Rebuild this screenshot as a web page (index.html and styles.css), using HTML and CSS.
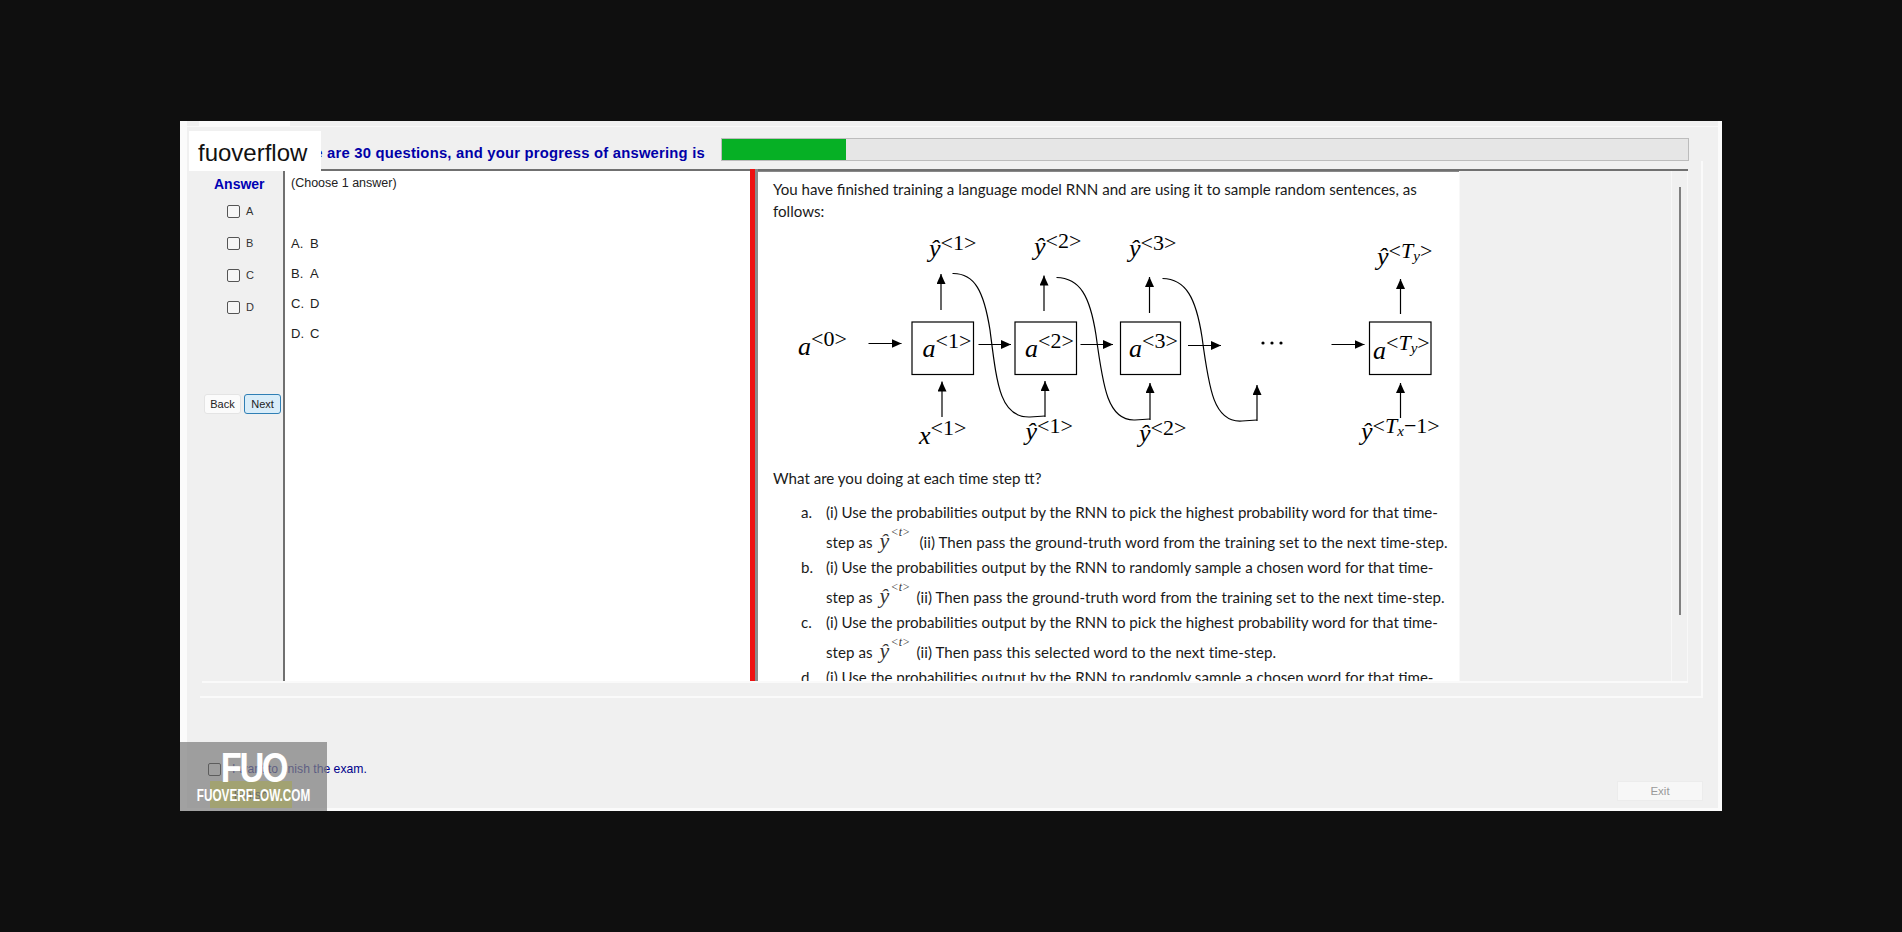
FILE: index.html
```html
<!DOCTYPE html>
<html lang="en">
<head>
  <meta charset="UTF-8">
  <title>Exam</title>
  <link rel="stylesheet" href="styles.css">
</head>
<body>

  <div class="window">
    <div class="tabs"><div class="tab"></div></div>

    <div class="head">
      <span class="head-text">There are 30 questions, and your progress of answering is</span>
      <div class="progress"><div class="progress-fill"></div></div>
    </div>

    <div class="exam">
      <div class="exam-inner">

        <div class="answers">
          <div class="answers-title">Answer</div>
          <label class="answer-row"><input type="checkbox"> A</label>
          <label class="answer-row"><input type="checkbox"> B</label>
          <label class="answer-row"><input type="checkbox"> C</label>
          <label class="answer-row"><input type="checkbox"> D</label>
          <div class="nav-buttons">
            <button class="btn-nav">Back</button>
            <button class="btn-nav btn-next">Next</button>
          </div>
        </div>

        <div class="choices">
          <div class="choices-hint">(Choose 1 answer)</div>
          <div class="choice"><span class="choice-key">A.</span>B</div>
          <div class="choice"><span class="choice-key">B.</span>A</div>
          <div class="choice"><span class="choice-key">C.</span>D</div>
          <div class="choice"><span class="choice-key">D.</span>C</div>
        </div>

        <div class="divider"></div>

        <div class="viewer">
          <div class="page">
            <p class="intro">You have finished training a language model RNN and are using it to sample random sentences, as follows:</p>

            <!-- viewBox uses window coordinates so the parts are easy to line up -->
            <svg class="rnn" viewBox="772 222 688 240" width="688" height="240">
              <defs>
                <marker id="head" markerUnits="userSpaceOnUse" markerWidth="10" markerHeight="9" refX="10" refY="4.5" orient="auto">
                  <path d="M0 0L10 4.5L0 9z" fill="#000"/>
                </marker>
              </defs>

              <rect class="cell" x="912" y="322" width="61.5" height="52.5"/>
              <rect class="cell" x="1015" y="322" width="61.5" height="52.5"/>
              <rect class="cell" x="1120.5" y="322" width="60" height="52.5"/>
              <rect class="cell" x="1369.5" y="322" width="61.5" height="52.5"/>

              <line class="arrow" x1="868.5" y1="343.5" x2="901.5" y2="343.5"/>
              <line class="arrow" x1="978.5" y1="344.5" x2="1011" y2="344.5"/>
              <line class="arrow" x1="1080.5" y1="344.5" x2="1113" y2="344.5"/>
              <line class="arrow" x1="1188" y1="345.5" x2="1221" y2="345.5"/>
              <line class="arrow" x1="1331.5" y1="344.5" x2="1364.5" y2="344.5"/>

              <line class="arrow" x1="941" y1="310" x2="941" y2="274"/>
              <line class="arrow" x1="1044" y1="311" x2="1044" y2="275.5"/>
              <line class="arrow" x1="1149.5" y1="313" x2="1149.5" y2="277"/>
              <line class="arrow" x1="1400.5" y1="314" x2="1400.5" y2="279"/>

              <line class="arrow" x1="942" y1="417" x2="942" y2="381.5"/>
              <line class="arrow" x1="1045" y1="417" x2="1045" y2="381"/>
              <line class="arrow" x1="1150" y1="420" x2="1150" y2="383"/>
              <line class="arrow" x1="1257" y1="421" x2="1257" y2="385"/>
              <line class="arrow" x1="1400.5" y1="418" x2="1400.5" y2="383"/>

              <path class="wire" d="M952.5 273.5C975 273 984 292 990 330C997 385 1000 418 1030 417L1045 416"/>
              <path class="wire" d="M1056.5 277.5C1080 278 1090 296 1096 335C1103 388 1108 421 1135 420L1150 419"/>
              <path class="wire" d="M1162.5 278.5C1186 279 1196 298 1202 337C1209 390 1214 423 1242 421L1257 420"/>

              <circle cx="1263" cy="343" r="1.6"/>
              <circle cx="1272" cy="343" r="1.6"/>
              <circle cx="1281" cy="343" r="1.6"/>

              <text class="math" x="929" y="257">ŷ<tspan class="sup" dy="-7">&lt;1&gt;</tspan></text>
              <text class="math" x="1034" y="255">ŷ<tspan class="sup" dy="-7">&lt;2&gt;</tspan></text>
              <text class="math" x="1129" y="257">ŷ<tspan class="sup" dy="-7">&lt;3&gt;</tspan></text>
              <text class="math" x="1377" y="265">ŷ<tspan class="sup" dy="-7">&lt;<tspan class="sub-i">T</tspan><tspan class="sub-i sub" dy="3">y</tspan><tspan dy="-3">&gt;</tspan></tspan></text>

              <text class="math" x="798" y="355">a<tspan class="sup" dy="-9">&lt;0&gt;</tspan></text>
              <text class="math" x="922.5" y="357">a<tspan class="sup" dy="-9">&lt;1&gt;</tspan></text>
              <text class="math" x="1025" y="357">a<tspan class="sup" dy="-9">&lt;2&gt;</tspan></text>
              <text class="math" x="1129" y="357">a<tspan class="sup" dy="-9">&lt;3&gt;</tspan></text>
              <text class="math" x="1373" y="359">a<tspan class="sup" dy="-9">&lt;<tspan class="sub-i">T</tspan><tspan class="sub-i sub" dy="3">y</tspan><tspan dy="-3">&gt;</tspan></tspan></text>

              <text class="math" x="919" y="444">x<tspan class="sup" dy="-9">&lt;1&gt;</tspan></text>
              <text class="math" x="1025.5" y="440">ŷ<tspan class="sup" dy="-7">&lt;1&gt;</tspan></text>
              <text class="math" x="1139" y="442">ŷ<tspan class="sup" dy="-7">&lt;2&gt;</tspan></text>
              <text class="math" x="1361" y="440">ŷ<tspan class="sup" dy="-7">&lt;<tspan class="sub-i">T</tspan><tspan class="sub-i sub" dy="3">x</tspan><tspan dy="-3">−1&gt;</tspan></tspan></text>
            </svg>

            <p class="ask">What are you doing at each time step tt?</p>

            <div class="opt">
              <span class="opt-key">a.</span>
              <div class="opt-line">(i) Use the probabilities output by the RNN to pick the highest probability word for that time-</div>
              <div class="opt-line opt-line-2">step as <span class="yt yt-wide">y&#770;<sup>&lt;t&gt;</sup></span>(ii) Then pass the ground-truth word from the training set to the next time-step.</div>
            </div>
            <div class="opt">
              <span class="opt-key">b.</span>
              <div class="opt-line">(i) Use the probabilities output by the RNN to randomly sample a chosen word for that time-</div>
              <div class="opt-line opt-line-2">step as <span class="yt">y&#770;<sup>&lt;t&gt;</sup></span>(ii) Then pass the ground-truth word from the training set to the next time-step.</div>
            </div>
            <div class="opt">
              <span class="opt-key">c.</span>
              <div class="opt-line">(i) Use the probabilities output by the RNN to pick the highest probability word for that time-</div>
              <div class="opt-line opt-line-2">step as <span class="yt">y&#770;<sup>&lt;t&gt;</sup></span>(ii) Then pass this selected word to the next time-step.</div>
            </div>
            <div class="opt">
              <span class="opt-key">d.</span>
              <div class="opt-line">(i) Use the probabilities output by the RNN to randomly sample a chosen word for that time-</div>
            </div>
          </div>

          <div class="gutter"></div>
          <div class="scroll"><div class="scroll-thumb"></div></div>
        </div>

      </div>
    </div>

    <div class="foot">
      <div class="finish">
        <label class="finish-check"><input type="checkbox"> I want to finish the exam.</label>
        <button class="btn-finish">Finish</button>
      </div>
      <button class="btn-exit">Exit</button>
    </div>

    <div class="logo">fuoverflow</div>
    <div class="stamp">
      <div class="stamp-mark">FUO</div>
      <div class="stamp-site">FUOVERFLOW.COM</div>
    </div>
  </div>

</body>
</html>
```

FILE: styles.css
```css
* {
  box-sizing: border-box;
}
html, body {
  height: 100%;
}
body {
  margin: 0;
  background: #0f0f0f;
  overflow: hidden;
  font-family: "Liberation Sans", Arial, sans-serif;
  font-size: 12px;
  color: #222;
}
.window {
  position: relative;
  width: 1542px;
  height: 690px;
  margin: 121px 0 0 180px;
  background: #f0f0f0;
  border-left: 7px solid #fbfbfb;
  border-right: 4px solid #fbfbfb;
  border-bottom: 3px solid #fbfbfb;
  display: flex;
  flex-direction: column;
}
.tabs {
  height: 6px;
  border-bottom: 1px solid #f9f9f9;
}
.tab {
  width: 91px;
  height: 6px;
  margin-left: 12px;
  background: #fafafa;
}

/* top bar */
.head {
  height: 23px;
  margin-top: 11px;
  padding-right: 29px;
  display: flex;
  justify-content: flex-end;
  align-items: center;
  gap: 16px;
}
.head-text {
  font-size: 14.8px;
  font-weight: bold;
  letter-spacing: 0.22px;
  color: #0000a8;
  padding-top: 6px;
  white-space: nowrap;
}
.progress {
  width: 968px;
  height: 23px;
  background: #e6e6e6;
  border: 1px solid #bcbcbc;
}
.progress-fill {
  width: 124px;
  height: 100%;
  background: #06b025;
}

/* exam frame */
.exam {
  width: 1503px;
  height: 537px;
  margin-left: 13px;
  padding: 8px 0 0 2px;
  border-right: 2px solid #fafafa;
  border-bottom: 2px solid #fafafa;
}
.exam-inner {
  display: flex;
  width: 1486px;
  height: 514px;
  border-bottom: 2px solid #fafafa;
}

.answers {
  width: 81px;
  padding-top: 7px;
  flex-shrink: 0;
}
.answers-title {
  height: 16px;
  margin: 0 0 3px 12px;
  font-size: 14px;
  font-weight: bold;
  line-height: 16px;
  color: #0000b4;
}
.answer-row {
  display: flex;
  align-items: center;
  gap: 6px;
  height: 32px;
  padding-left: 25px;
  font-size: 11px;
  color: #333;
}
input[type="checkbox"] {
  appearance: none;
  width: 13px;
  height: 13px;
  margin: 0;
  background: #f6f6f6;
  border: 1px solid #555;
  border-radius: 2px;
}
.nav-buttons {
  display: flex;
  gap: 3px;
  margin: 71px 0 0 2px;
}
.btn-nav {
  width: 37px;
  height: 20px;
  padding: 0;
  background: #fbfbfb;
  border: 1px solid #e4e4e4;
  border-radius: 3px;
  font-family: inherit;
  font-size: 11px;
  color: #222;
}
.btn-next {
  background: #d9edf9;
  border-color: #2f7fb5;
}

.choices {
  width: 467px;
  padding: 4px 0 0 6px;
  background: #fff;
  border-left: 2px solid #707070;
  border-top: 2px solid #707070;
  flex-shrink: 0;
}
.choices-hint {
  height: 16px;
  margin-bottom: 38px;
  font-size: 12.5px;
  line-height: 16px;
}
.choice {
  height: 30px;
  font-size: 13px;
  line-height: 30px;
}
.choice-key {
  display: inline-block;
  width: 19px;
}
.divider {
  width: 8px;
  background: #ee1111;
  border-right: 3px solid #8a8a8a;
  flex-shrink: 0;
}

.viewer {
  display: flex;
  flex: 1;
  min-width: 0;
  border-top: 2px solid #707070;
}
.page {
  width: 701px;
  height: 510px;
  padding: 7px 0 0 15px;
  background: #fff;
  border-top: 1px solid #888;
  overflow: hidden;
  flex-shrink: 0;
  font-family: Lato, "Open Sans", sans-serif;
  font-size: 15.1px;
  line-height: 21.5px;
  color: #1a1a1a;
}
.intro {
  margin: 0;
  width: 670px;
}
.ask {
  margin: 6px 0 10px;
}
.rnn {
  display: block;
  margin-left: -1px;
}
.cell {
  fill: #fff;
  stroke: #000;
  stroke-width: 1.2;
}
.arrow {
  stroke: #000;
  stroke-width: 1.2;
  marker-end: url(#head);
}
.wire {
  fill: none;
  stroke: #000;
  stroke-width: 1.2;
}
.math {
  font-family: "Liberation Serif", serif;
  font-style: italic;
  font-size: 26px;
  fill: #000;
}
.sup {
  font-style: normal;
  font-size: 22px;
}
.sub-i {
  font-style: italic;
}
.sub {
  font-size: 15px;
}

.opt {
  position: relative;
  padding-left: 53px;
  white-space: nowrap;
  margin-bottom: 0.3px;
}
.opt-key {
  position: absolute;
  left: 28px;
  top: 0;
  line-height: 25px;
}
.opt-line {
  height: 25px;
  line-height: 25px;
}
.opt-line-2 {
  height: 30px;
  padding-top: 5px;
  letter-spacing: 0.05px;
}
.yt {
  position: relative;
  display: inline-block;
  width: 37px;
  margin-left: 3px;
  font-family: "Liberation Serif", serif;
  font-style: italic;
  font-size: 22px;
  line-height: 1;
  color: #333;
}
.yt-wide {
  width: 40px;
}
.yt sup {
  position: absolute;
  top: -4px;
  left: 11px;
  font-size: 12px;
  line-height: 1;
}

.gutter {
  flex: 1;
  border-left: 1px solid #f8f8f8;
}
.scroll {
  width: 17px;
  padding: 16px 0 0 7px;
  border-left: 1px solid #f8f8f8;
  border-right: 1px solid #f8f8f8;
}
.scroll-thumb {
  width: 2px;
  height: 428px;
  background: #808080;
}

/* bottom bar */
.foot {
  flex: 1;
  display: flex;
  justify-content: space-between;
  align-items: flex-end;
  padding: 0 15px 6px 21px;
}
.finish-check {
  display: flex;
  align-items: center;
  gap: 11px;
  height: 16px;
  margin-bottom: -1px;
  font-size: 12.2px;
  color: #00008b;
}
.finish-check input {
  background: transparent;
  border-color: #000;
}
.btn-finish {
  display: block;
  width: 82px;
  height: 27px;
  margin: 5px 0 -6px 2px;
  background: #ffff50;
  border: 0;
  font-family: inherit;
  font-size: 13px;
  color: #333;
}
.btn-exit {
  width: 86px;
  height: 20px;
  margin-bottom: 1px;
  padding: 0;
  background: #f7f7f7;
  border: 1px solid #ececec;
  font-family: inherit;
  font-size: 11.5px;
  color: #9a9a9a;
}

/* overlays from the site that posted the screenshot */
.logo {
  position: absolute;
  left: 2px;
  top: 10px;
  width: 132px;
  height: 40px;
  padding-left: 9px;
  background: #fff;
  font-size: 24px;
  line-height: 44px;
  color: #111;
}
.stamp {
  position: absolute;
  left: -7px;
  bottom: -3px;
  width: 147px;
  height: 69px;
  background: rgba(128, 128, 128, 0.73);
  color: #fff;
  text-align: center;
}
.stamp-mark {
  height: 34px;
  margin-top: 9px;
  font-size: 42px;
  font-weight: bold;
  line-height: 34px;
  letter-spacing: -3px;
  transform: scaleX(0.82);
}
.stamp-site {
  width: 171px;
  margin-left: -12px;
  font-size: 17px;
  font-weight: bold;
  line-height: 22px;
  white-space: nowrap;
  transform: scaleX(0.69);
}
```
